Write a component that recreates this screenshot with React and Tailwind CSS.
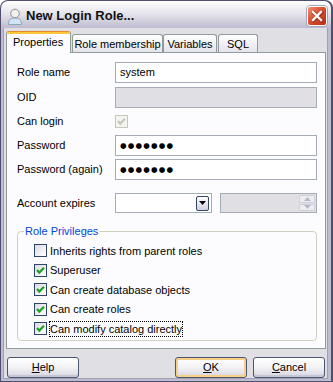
import React from 'react';

function Check({ checked, disabled }) {
  return (
    <div
      className={`w-[13px] h-[13px] shrink-0 border flex items-center justify-center ${
        disabled
          ? 'border-[#c9c7ba] bg-[#f4f4f2]'
          : 'border-[#2e4468] bg-[#ecebf0] bg-linear-to-br from-[#dcdbe2] to-white'
      }`}
    >
      {checked && (
        <svg width="11" height="11" viewBox="0 0 11 11">
          <polyline
            points="2,5 4.3,7.6 9,2.8"
            fill="none"
            stroke={disabled ? '#c9c7ba' : '#21a121'}
            strokeWidth="2.2"
          />
        </svg>
      )}
    </div>
  );
}

function Field({ disabled, children }) {
  return (
    <div
      className={`h-[21px] border border-[#a5acb5] px-[4px] flex items-center ${
        disabled ? 'bg-[#e0dfe3]' : 'bg-white'
      }`}
    >
      {children}
    </div>
  );
}

function Row({ label, children, className = '' }) {
  return (
    <div className={`grid grid-cols-[98px_202px] items-center ${className}`}>
      <span>{label}</span>
      {children}
    </div>
  );
}

function Dots() {
  return (
    <span className="font-['DejaVu_Sans',sans-serif] text-[7.5px] tracking-[1.2px] pt-px">●●●●●●●</span>
  );
}

function Priv({ label, checked, focus }) {
  return (
    <div className="h-[19.5px] flex items-center">
      <Check checked={checked} />
      <span
        className={`ml-[2px] px-0 leading-[14px] border ${
          focus ? 'border-dotted border-black' : 'border-transparent'
        }`}
      >
        {label}
      </span>
    </div>
  );
}

function Tab({ label, active, className = '' }) {
  if (active) {
    return (
      <div className={`h-[22px] border border-b-0 border-[#919b9c] border-t-[#e68b2c] rounded-t-[3px] bg-[#fcfcfe] flex flex-col ${className}`}>
        <div className="h-[2px] bg-[#ffc73c]" />
        <div className="flex-1 flex items-center pl-[6px] pb-[2px]">{label}</div>
      </div>
    );
  }
  return (
    <div className={`h-[18px] mb-px border border-b-0 border-[#919b9c] rounded-t-[3px] bg-[#f1f0f4] bg-linear-to-b from-white to-[#e4e3ea] flex items-center justify-center pt-px ${className}`}>
      {label}
    </div>
  );
}

function Button({ children, isDefault }) {
  return (
    <div
      className={`w-[72px] h-[21px] rounded-[3px] border border-[#4b5670] flex items-center justify-center bg-[#eeeef2] bg-linear-to-b from-white via-[#f2f2f5] to-[#d6d5e0] ${
        isDefault ? 'shadow-[inset_0_0_0_2px_#f8cf83]' : 'shadow-[inset_0_-2px_0_#c7c6d6]'
      }`}
    >
      {children}
    </div>
  );
}

function CloseIcon() {
  return (
    <svg width="22" height="22" viewBox="0 0 22 22">
      <defs>
        <linearGradient id="closeRed" x1="0" y1="0" x2="1" y2="1">
          <stop offset="0" stopColor="#f0947c" />
          <stop offset="0.45" stopColor="#dc5034" />
          <stop offset="1" stopColor="#b52a12" />
        </linearGradient>
      </defs>
      <rect x="0.5" y="0.5" width="21" height="21" rx="3.5" fill="none" stroke="#a6a5b8" />
      <rect x="1.5" y="1.5" width="19" height="19" rx="2.5" fill="url(#closeRed)" stroke="#ffffff" />
      <path d="M7 7 L15 15 M15 7 L7 15" stroke="#9c2a16" strokeWidth="3.4" strokeLinecap="square" transform="translate(0.6 0.6)" />
      <path d="M7 7 L15 15 M15 7 L7 15" stroke="#ffffff" strokeWidth="2.3" strokeLinecap="square" />
    </svg>
  );
}

export default function App() {
  return (
    <div className="w-[333px] h-[382px] bg-[#4f4e6e] rounded-t-[8px] pl-px pr-[2px] pb-px flex flex-col font-['Liberation_Sans',Arial,sans-serif] text-[11px] text-black">
      {/* title bar */}
      <div className="h-[27px] mt-px rounded-t-[7px] bg-[#dcdbe5] bg-linear-to-b from-white via-[#e3e2ea] to-[#bdbccf] flex items-center pl-[5px] pr-[3px]">
        <svg width="18" height="18" viewBox="0 0 18 18" className="mt-[2px]">
          <path d="M2.5 17.5 C2.5 12.5 5 11 9 11 C13 11 15.5 12.5 15.5 17.5 Z" fill="#d3e4f4" stroke="#8ea5bd" />
          <circle cx="9" cy="6.5" r="4.3" fill="#f3f1ee" stroke="#8c8c8c" />
        </svg>
        <span className="ml-[2px] pt-[3px] font-bold text-[13px] text-[#111]">New Login Role...</span>
        <div className="ml-auto mt-[3px] flex">
          <CloseIcon />
        </div>
      </div>

      {/* frame */}
      <div className="flex-1 bg-[#bdbcd0] pl-[2px] pr-[3px] pb-[2px] flex">
        <div className="flex-1 border border-t-0 border-[#a09fb3] bg-[#e0dfe3] flex flex-col pl-[2px]">
          {/* tabs */}
          <div className="mt-[3px] h-[22px] flex items-end relative z-10">
            <Tab label="Properties" active className="w-[65px]" />
            <Tab label="Role membership" className="ml-px w-[91px]" />
            <Tab label="Variables" className="w-[54px]" />
            <Tab label="SQL" className="ml-px w-[40px]" />
          </div>

          {/* panel */}
          <div className="-mt-px w-[320px] h-[297px] border border-[#919b9c] bg-[#fcfcfe] pl-[10px]">
            <div className="mt-[9px] flex flex-col">
              <Row label="Role name">
                <Field>system</Field>
              </Row>
              <Row label="OID" className="mt-[4px]">
                <Field disabled />
              </Row>
              <Row label="Can login" className="mt-[3px] h-[21px]">
                <Check checked disabled />
              </Row>
              <Row label="Password" className="mt-[3px]">
                <Field><Dots /></Field>
              </Row>
              <Row label="Password (again)" className="mt-[3px]">
                <Field><Dots /></Field>
              </Row>
              <Row label="Account expires" className="mt-[13px]">
                <div className="flex gap-[8px]">
                  <div className="w-[97px] h-[20px] border border-[#a5acb5] bg-white flex items-center justify-end pr-[2px]">
                    <div className="w-[13px] h-[15px] rounded-[2px] border border-[#33466a] bg-[#e6e5ee] bg-linear-to-b from-white to-[#d2d1df] flex items-center justify-center">
                      <svg width="7" height="4" viewBox="0 0 7 4">
                        <path d="M0 0 L7 0 L3.5 4 Z" fill="#000" />
                      </svg>
                    </div>
                  </div>
                  <div className="w-[97px] h-[20px] border border-[#a5acb5] bg-[#e0dfe3] flex items-center justify-end pr-px">
                    <div className="w-[16px] h-[16px] flex flex-col gap-px">
                      <div className="flex-1 rounded-[2px] border border-[#cfcedb] bg-[#eeedf2] flex items-center justify-center">
                        <svg width="7" height="4" viewBox="0 0 7 4">
                          <path d="M0 4 L7 4 L3.5 0 Z" fill="#b9b8c6" />
                        </svg>
                      </div>
                      <div className="flex-1 rounded-[2px] border border-[#cfcedb] bg-[#eeedf2] flex items-center justify-center">
                        <svg width="7" height="4" viewBox="0 0 7 4">
                          <path d="M0 0 L7 0 L3.5 4 Z" fill="#b9b8c6" />
                        </svg>
                      </div>
                    </div>
                  </div>
                </div>
              </Row>

              <fieldset className="mt-[12px] w-[300px] border border-[#d0d0bf] rounded-[4px] px-0 pb-[1px]">
                <legend className="ml-[6px] px-px leading-[13px] text-[#0046d5]">Role Privileges</legend>
                <div className="pl-[16px] mt-[3px]">
                  <Priv label="Inherits rights from parent roles" />
                  <Priv label="Superuser" checked />
                  <Priv label="Can create database objects" checked />
                  <Priv label="Can create roles" checked />
                  <Priv label="Can modify catalog directly" checked focus />
                </div>
              </fieldset>
            </div>
          </div>

          {/* buttons */}
          <div className="mt-[8px] flex pr-[2px]">
            <div className="ml-[1px]">
              <Button><span><span className="underline">H</span>elp</span></Button>
            </div>
            <div className="ml-auto">
              <Button isDefault><span><span className="underline">O</span>K</span></Button>
            </div>
            <div className="ml-[6px]">
              <Button><span><span className="underline">C</span>ancel</span></Button>
            </div>
          </div>
        </div>
      </div>
    </div>
  );
}
